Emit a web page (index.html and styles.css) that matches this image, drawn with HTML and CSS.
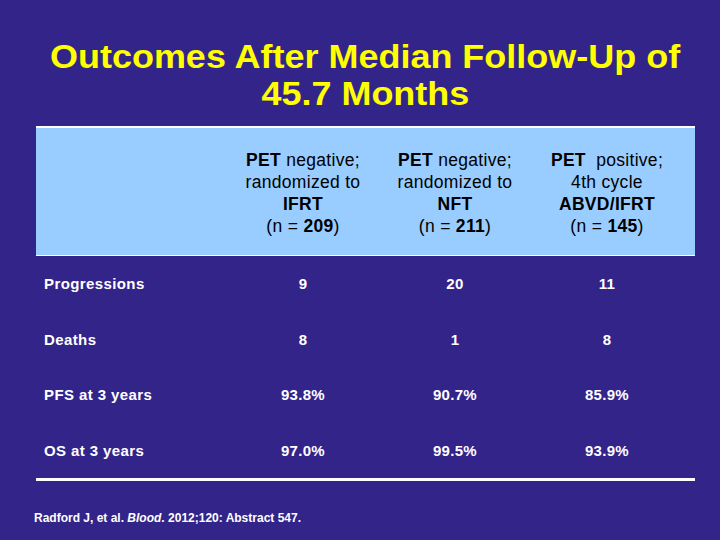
FILE: index.html
```html
<!DOCTYPE html>
<html>
<head>
<meta charset="utf-8">
<link rel="stylesheet" href="styles.css">
</head>
<body>
<div class="slide">
  <h1 class="title"><span class="t1">Outcomes After Median Follow-Up of</span><span class="t2">45.7 Months</span></h1>
  <div class="table">
    <div class="head">
      <div class="hcell"></div>
      <div class="hcell"><b>PET</b> negative;<br>randomized to<br><b>IFRT</b><br>(n = <b>209</b>)</div>
      <div class="hcell"><b>PET</b> negative;<br>randomized to<br><b>NFT</b><br>(n = <b>211</b>)</div>
      <div class="hcell"><b>PET</b>&nbsp; positive;<br>4th cycle<br><b>ABVD/IFRT</b><br>(n = <b>145</b>)</div>
    </div>
    <div class="row"><div class="label">Progressions</div><div class="val">9</div><div class="val">20</div><div class="val">11</div></div>
    <div class="row"><div class="label">Deaths</div><div class="val">8</div><div class="val">1</div><div class="val">8</div></div>
    <div class="row"><div class="label">PFS at 3 years</div><div class="val">93.8%</div><div class="val">90.7%</div><div class="val">85.9%</div></div>
    <div class="row"><div class="label">OS at 3 years</div><div class="val">97.0%</div><div class="val">99.5%</div><div class="val">93.9%</div></div>
  </div>
  <p class="ref">Radford J, et al. <i>Blood</i>. 2012;120: Abstract 547.</p>
</div>
</body>
</html>
```

FILE: styles.css
```css
html, body {
  margin: 0;
  padding: 0;
  background: #33248a;
}
.slide {
  width: 720px;
  height: 540px;
  box-sizing: border-box;
  padding-top: 38px;
  font-family: "Liberation Sans", Arial, sans-serif;
  overflow: hidden;
}
.title {
  margin: 0 0 0 10px;
  color: #ffff00;
  font-size: 33px;
  font-weight: bold;
  line-height: 37px;
  text-align: center;
  display: flex;
  flex-direction: column;
  align-items: center;
}
.t1, .t2 {
  display: block;
  transform: scaleX(1.09);
  white-space: nowrap;
}
.table {
  margin: 14px 25px 0 36px;
  width: 659px;
}
.head {
  display: grid;
  grid-template-columns: 191px 152px 152px 152px 12px;
  background: #99ccff;
  border-top: 2px solid #ffffff;
  border-bottom: 1px solid #ffffff;
  height: 127px;
  align-items: center;
}
.hcell {
  color: #000;
  font-size: 17.5px;
  line-height: 22px;
  letter-spacing: 0.3px;
  text-align: center;
  padding-top: 2px;
  white-space: nowrap;
}
.row {
  display: grid;
  grid-template-columns: 191px 152px 152px 152px 12px;
  height: 55.5px;
  align-items: center;
  color: #ffffff;
  font-size: 15px;
  font-weight: bold;
}
.row:last-child {
  border-bottom: 3px solid #ffffff;
}
.label {
  padding-left: 8px;
  letter-spacing: 0.4px;
}
.val {
  text-align: center;
  letter-spacing: 0.3px;
}
.ref {
  margin: 30px 0 0 34px;
  color: #ffffff;
  font-size: 12px;
  font-weight: bold;
}
```
